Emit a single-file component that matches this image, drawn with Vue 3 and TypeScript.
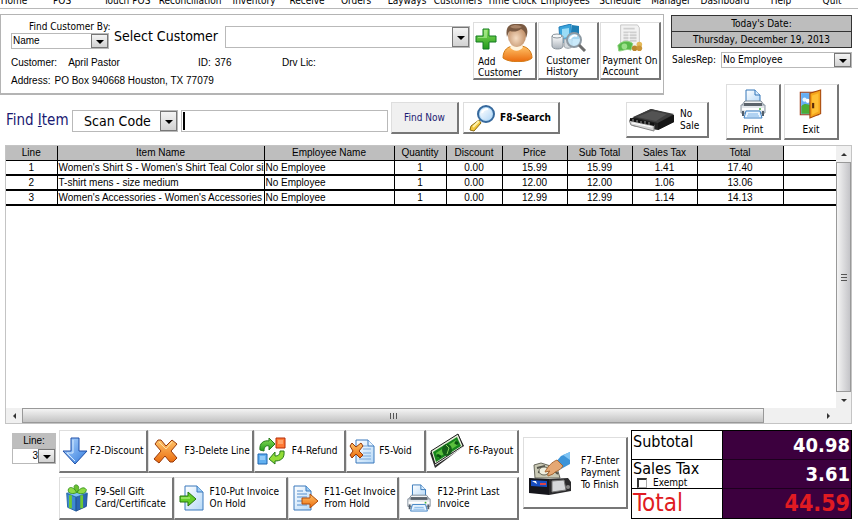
<script setup lang="ts">
import { ref } from 'vue'

interface InvoiceLine {
  item: string
  employee: string
  quantity: number
  discount: number
  price: number
  tax: number
}

interface Action {
  icon: string
  key: string
  lines: string[]
}

const menu: string[] = [
  'Home', 'POS', 'Touch POS', 'Reconciliation', 'Inventory', 'Receive', 'Orders', 'Layways',
  'Customers', 'Time Clock', 'Employees', 'Schedule', 'Manager', 'Dashboard', 'Help', 'Quit',
]

const headings: string[] = [
  'Line', 'Item Name', 'Employee Name', 'Quantity', 'Discount', 'Price', 'Sub Total', 'Sales Tax', 'Total',
]

const lines: InvoiceLine[] = [
  { item: "Women's Shirt S - Women's Shirt Teal Color size", employee: 'No Employee', quantity: 1, discount: 0, price: 15.99, tax: 1.41 },
  { item: 'T-shirt mens - size medium', employee: 'No Employee', quantity: 1, discount: 0, price: 12, tax: 1.06 },
  { item: "Women's Accessories - Women's Accessories", employee: 'No Employee', quantity: 1, discount: 0, price: 12.99, tax: 1.14 },
]

const customerActions: Action[] = [
  { icon: 'add', key: 'add', lines: ['Add', 'Customer'] },
  { icon: 'history', key: 'history', lines: ['Customer', 'History'] },
  { icon: 'account', key: 'account', lines: ['Payment On', 'Account'] },
]

const firstActions: Action[] = [
  { icon: 'down', key: 'f2', lines: ['F2-Discount'] },
  { icon: 'cross', key: 'f3', lines: ['F3-Delete Line'] },
  { icon: 'refund', key: 'f4', lines: ['F4-Refund'] },
  { icon: 'void', key: 'f5', lines: ['F5-Void'] },
  { icon: 'money', key: 'f6', lines: ['F6-Payout'] },
]

const secondActions: Action[] = [
  { icon: 'gift', key: 'f9', lines: ['F9-Sell Gift', 'Card/Certificate'] },
  { icon: 'hold', key: 'f10', lines: ['F10-Put Invoice', 'On Hold'] },
  { icon: 'unhold', key: 'f11', lines: ['F11-Get Invoice', 'From Hold'] },
  { icon: 'printer', key: 'f12', lines: ['F12-Print Last', 'Invoice'] },
]

const scan = ref('')
const exempt = ref(false)
const money = (value: number): string => value.toFixed(2)
const subtotal = lines.reduce((sum, line) => sum + line.price * line.quantity, 0)
const tax = lines.reduce((sum, line) => sum + line.tax, 0)
</script>

<template>
  <svg class="sprites" aria-hidden="true">
    <defs>
      <linearGradient id="g-blue" x1="0" y1="0" x2="1" y2="1"><stop offset="0" stop-color="#b9dcff" /><stop offset="1" stop-color="#2f78dc" /></linearGradient>
      <linearGradient id="g-orange" x1="0" y1="0" x2="0" y2="1"><stop offset="0" stop-color="#ffc46a" /><stop offset="1" stop-color="#ea6a0c" /></linearGradient>
      <linearGradient id="g-green" x1="0" y1="0" x2="0" y2="1"><stop offset="0" stop-color="#8be05a" /><stop offset="1" stop-color="#229a1c" /></linearGradient>
      <linearGradient id="g-paper" x1="0" y1="0" x2="1" y2="1"><stop offset="0" stop-color="#ffffff" /><stop offset="1" stop-color="#b5d8f7" /></linearGradient>
      <linearGradient id="g-grey" x1="0" y1="0" x2="0" y2="1"><stop offset="0" stop-color="#ffffff" /><stop offset="1" stop-color="#aab2ba" /></linearGradient>
      <radialGradient id="g-face" cx=".45" cy=".6" r=".6"><stop offset="0" stop-color="#f6dcc2" /><stop offset="1" stop-color="#bd8a62" /></radialGradient>
    </defs>
    <symbol id="i-add" viewBox="0 0 60 38">
      <path d="M9 5h6v7h7v6h-7v7H9v-7H2v-6h7z" fill="url(#g-green)" stroke="#127a22" />
      <path d="M10 6h3v8H4v-1h6z" fill="#b4f0a0" opacity=".6" />
      <path d="M29 34c0-8 5-12 11-12h6c7 0 12 5 12 12-5 5-23 5-29 0z" fill="url(#g-orange)" stroke="#d27a14" />
      <path d="M38 20h9l2 3c-3 5-10 5-13 0z" fill="#fff3dc" />
      <ellipse cx="43" cy="12" rx="9" ry="11" fill="url(#g-face)" />
      <path d="M33 13C31 4 35 0 40 0h7c6 1 8 6 5 14 0-5-2-8-5-9-4 3-8 3-11 2-2 1-2 4-3 6z" fill="#7a5a42" />
      <path d="M36 3c4-3 9-2 12 0-4 2-8 2-12 0z" fill="#a98468" />
    </symbol>
    <symbol id="i-history" viewBox="0 0 40 28">
      <path d="M11 3l12-3 1 17-12 2z" fill="#3aa4dc" stroke="#1d7cb8" />
      <path d="M14 5l7-1v9l-7 1z" fill="#9adcf6" />
      <path d="M24 1l7 1v13h-7z" fill="#1f7fb4" />
      <path d="M4 12v10c0 4 11 4 11 0V12z" fill="url(#g-grey)" stroke="#8b949c" />
      <ellipse cx="9" cy="12" rx="5" ry="2" fill="#f5f7f8" stroke="#8b949c" />
      <path d="M16 15v7c0 3 8 3 8 0v-7z" fill="#d4d9dd" stroke="#9aa2a8" />
      <circle cx="26" cy="16" r="7" fill="#bfe6fa" fill-opacity=".85" stroke="#8d9aa4" stroke-width="2" />
      <path d="M31 21l6 6" stroke="#6d6d6d" stroke-width="3" />
      <path d="M22 15c1-3 4-4 7-3" stroke="#fff" stroke-width="2" fill="none" />
    </symbol>
    <symbol id="i-account" viewBox="0 0 28 30">
      <path d="M4 1h18l2 3v22H4z" fill="#f2f2f2" stroke="#c4c4c4" />
      <path d="M7 5h12M7 9h14M7 12h14M7 15h14M7 18h14" stroke="#cfcfcf" stroke-width="2" />
      <path d="M13 9v10" stroke="#fff" />
      <path d="M1 23c4-5 11-6 16-2l-2 7c-5-2-9 1-13 1z" fill="#58b94a" stroke="#8fd47f" />
      <circle cx="8" cy="24" r="3" fill="#9be08a" />
      <circle cx="19" cy="26" r="3" fill="#b9862c" /><circle cx="24" cy="22" r="3" fill="#e3b858" /><circle cx="24" cy="26" r="3" fill="#c99436" />
    </symbol>
    <symbol id="i-search" viewBox="0 0 28 28">
      <path d="M10 16l2 3-7 8-4-1 1-4z" fill="#f3c63a" stroke="#8a6a10" />
      <path d="M4 23l6-6" stroke="#fff3a8" stroke-width="2" />
      <circle cx="17" cy="10" r="8" fill="#b6dcf8" stroke="#36689c" stroke-width="2" />
      <circle cx="17" cy="10" r="6" fill="url(#g-paper)" />
      <path d="M13 9c1-3 3-4 6-4" stroke="#fff" stroke-width="2" fill="none" />
    </symbol>
    <symbol id="i-drawer" viewBox="0 0 46 24">
      <path d="M1 11L22 1l23 6v7L29 22 4 18z" fill="#222" />
      <path d="M4 9L22 1l23 5-16 9z" fill="#3e3e3e" />
      <path d="M8 9L23 3l15 3-11 7z" fill="#535353" />
      <path d="M29 15l16-8v7l-16 8z" fill="#151515" />
      <path d="M0 12l25 5v6L2 17z" fill="#d6d6d6" stroke="#858585" />
      <path d="M1 10l24 5v3L1 13z" fill="#111" />
      <path d="M4 11v3M8 12v3M12 13v3M16 13v3M20 14v3" stroke="#999" />
      <path d="M3 15l20 4" stroke="#fff" />
    </symbol>
    <symbol id="i-printer" viewBox="0 0 26 30">
      <path d="M6 14V1h9l5 5v8z" fill="url(#g-paper)" stroke="#3476b8" />
      <path d="M15 1v5h5" fill="#d9edff" stroke="#3476b8" />
      <path d="M5 12h16l3 4v8H2v-8z" fill="url(#g-grey)" stroke="#7b8792" />
      <path d="M1 16h24v8H1z" fill="#e4e8ec" stroke="#8c97a2" />
      <path d="M4 14h18v3H4z" fill="#5b636b" />
      <path d="M2 20h22" stroke="#fff" stroke-width="2" />
      <circle cx="20" cy="20" r="1" fill="#41b53c" />
      <path d="M6 22h14l2 7H4z" fill="#e8f4ff" stroke="#3b80c4" />
      <path d="M8 25h10M7 27h12" stroke="#7ab2e6" />
      <path d="M3 22v5M23 22v5" stroke="#525f6c" stroke-width="2" />
    </symbol>
    <symbol id="i-exit" viewBox="0 0 22 28">
      <path d="M1 3h17v21H1z" fill="#8ac6ff" stroke="#a03c14" />
      <path d="M2 4h9v19H2z" fill="#66aef4" />
      <circle cx="5" cy="10" r="2" fill="#e7f5ff" /><circle cx="8" cy="11" r="2" fill="#fff" />
      <path d="M2 16c3-3 6-2 9 0v7H2z" fill="#4bad34" />
      <path d="M10 4l10-3v22l-10 4z" fill="#f5a51c" stroke="#a8480c" />
      <path d="M12 6l6-2v17l-6 3z" fill="#ffc035" />
      <path d="M13 13v5" stroke="#5b2a08" stroke-width="2" />
    </symbol>
    <symbol id="i-down" viewBox="0 0 26 28">
      <path d="M9 1h8v13h8L13 27 1 14h8z" fill="url(#g-blue)" stroke="#1f4fa8" />
      <path d="M11 3v13H5l8 8" stroke="#d5eaff" fill="none" />
    </symbol>
    <symbol id="i-cross" viewBox="0 0 26 26">
      <path d="M5 2l3 0 5 6 6-6 5 4-6 7 6 7-4 4-3 0-5-6-6 7-5-4 7-8-6-7z" fill="url(#g-orange)" stroke="#96380a" />
      <path d="M6 4l7 7 6-7" stroke="#ffe0a4" fill="none" />
    </symbol>
    <symbol id="i-refund" viewBox="0 0 30 28">
      <path d="M3 13C2 6 7 3 12 4V1l6 6-6 6v-4c-3-1-5 1-5 5z" fill="url(#g-green)" stroke="#267a1a" />
      <path d="M27 14c1 8-4 10-9 10v3l-6-5 6-7v4c3 0 5-1 5-5z" fill="#92dc36" stroke="#267a1a" />
      <path d="M19 1h9v10h-9z" fill="#ff7a35" stroke="#b52c08" /><path d="M21 3h5v4h-5z" fill="#ffa36a" />
      <path d="M1 17h9v10H1z" fill="#62b0f0" stroke="#1c64b0" /><path d="M3 19h5v4H3z" fill="#94ccf8" />
    </symbol>
    <symbol id="i-void" viewBox="0 0 26 26">
      <path d="M7 2h12l6 6v17H7z" fill="url(#g-paper)" stroke="#3a78bc" />
      <path d="M19 2v6h6" fill="#e8f4ff" stroke="#3a78bc" />
      <path d="M14 8h5M14 11h8M14 15h8M12 18h10M10 21h12" stroke="#7aa9da" />
      <path d="M3 5l4 4 5-4 2 3-4 5 4 4-3 3-4-4-4 4-2-3 3-4-3-5z" fill="url(#g-orange)" stroke="#96380a" />
    </symbol>
    <symbol id="i-money" viewBox="0 0 36 36">
      <path d="M1 20L29 1l6 12L6 35z" fill="#2c2c2c" />
      <path d="M2 18L29 1l5 12L6 31z" fill="#e4ecd8" stroke="#1d1d1d" />
      <path d="M4 19L28 4l4 9L7 29z" fill="#16851c" />
      <path d="M7 20L27 7l2 5L9 25z" fill="#5abf3d" />
      <ellipse cx="18" cy="17" rx="5" ry="6" fill="#145e19" /><path d="M17 12l3 3-2 6" stroke="#86d05e" fill="none" />
      <path d="M8 22l4 2M26 9l3 2" stroke="#0a5312" stroke-width="3" />
      <path d="M6 32L34 14" stroke="#eee" />
    </symbol>
    <symbol id="i-gift" viewBox="0 0 24 30">
      <path d="M1 10l10 4v15L2 25z" fill="#3d8ad2" stroke="#2364a4" /><path d="M11 14l12-4-1 14-11 5z" fill="#2b66b4" stroke="#204d8e" />
      <path d="M1 10l11-3 11 3-12 4z" fill="#7ec0f2" stroke="#2b6eae" />
      <path d="M5 12v14M17 12v14" stroke="#6fc932" stroke-width="3" />
      <path d="M12 9C6 12 1 9 3 5c3-3 6 0 9 4zM12 9c5 3 10 1 10-3-3-4-7-1-10 3z" fill="#8edb45" stroke="#3a9420" />
      <path d="M12 9C8 5 8 1 11 1s4 4 1 8z" fill="#6cc030" stroke="#3a9420" />
    </symbol>
    <symbol id="i-hold" viewBox="0 0 26 26">
      <path d="M6 1h12l6 6v18H6z" fill="url(#g-paper)" stroke="#3a78bc" />
      <path d="M18 1v6h6" fill="#9acbf4" stroke="#3a78bc" />
      <path d="M1 11h8V7l8 7-8 7v-4H1z" fill="#65ce27" stroke="#25760f" />
      <path d="M2 13h9" stroke="#c4f49a" />
    </symbol>
    <symbol id="i-unhold" viewBox="0 0 26 26">
      <path d="M1 1h12l5 5v19H1z" fill="url(#g-paper)" stroke="#3a78bc" />
      <path d="M13 1v5h5" fill="#9acbf4" stroke="#3a78bc" />
      <path d="M4 6h6M4 9h10M4 12h10M4 16h8M4 20h10" stroke="#568fcc" />
      <path d="M9 13h8V9l8 7-8 7v-4H9z" fill="url(#g-orange)" stroke="#b04a08" />
    </symbol>
    <symbol id="i-wallet" viewBox="0 0 44 44">
      <path d="M27 12L33 5l9-4v12l-9 5z" fill="#3d94d8" /><path d="M35 4l7-3v8z" fill="#7fc4f4" />
      <path d="M6 14l7-2 16 5 3 10H7z" fill="#c9c8b4" stroke="#66665a" />
      <path d="M9 17l8-2M10 21l14 2M22 16l8 7" stroke="#55554c" stroke-width="2" />
      <ellipse cx="16" cy="20" rx="5" ry="4" fill="#efeede" stroke="#6a6a5c" />
      <path d="M17 21c3-6 7-10 12-12l6 6c-3 5-8 5-10 8l-5 2c-1-2 1-4 2-5z" fill="#e5a874" stroke="#a76835" />
      <path d="M1 27l20 1v16l-20-2z" fill="#16161c" /><path d="M21 28l19-1 3 4v9l-22 4z" fill="#2a2a2c" />
      <path d="M3 29l16 1v6l-16-1z" fill="#174ec2" /><path d="M4 30h4l1 3z" fill="#fff" /><path d="M12 32h6v2h-6z" fill="#d44" />
      <path d="M24 30l12-1 2 10-14 2z" fill="#d6d8da" stroke="#777" />
      <circle cx="40" cy="36" r="2" fill="#888" />
    </symbol>
  </svg>

  <nav class="menu" aria-label="Main">
    <a v-for="entry in menu" :key="entry" href="#">{{ entry }}</a>
  </nav>

  <main class="page">
    <header class="top">
      <section class="customer">
        <div class="pick">
          <div class="pick-by">
            <label for="by">Find Customer By:</label>
            <span class="combo small"><select id="by"><option>Name</option></select></span>
          </div>
          <label class="big" for="customer">Select Customer</label>
          <span class="combo grow"><select id="customer"><option></option></select></span>
        </div>
        <dl class="facts">
          <div class="who"><dt>Customer:</dt><dd>April Pastor</dd></div>
          <div class="ident"><dt>ID:</dt><dd>376</dd></div>
          <div><dt>Drv Lic:</dt><dd></dd></div>
          <div class="address"><dt>Address:</dt><dd>PO Box 940668 Houston, TX 77079</dd></div>
        </dl>
        <div class="customer-actions">
          <button v-for="a in customerActions" :key="a.key" type="button" class="btn tall" :class="a.key">
            <svg class="icon"><use :href="'#i-' + a.icon" /></svg>
            <span><template v-for="(l, i) in a.lines" :key="l"><br v-if="i">{{ l }}</template></span>
          </button>
        </div>
      </section>
      <section class="session">
        <p class="date">Today's Date:</p>
        <p class="date">Thursday, December 19, 2013</p>
        <div class="rep">
          <label for="rep">SalesRep:</label>
          <span class="combo grow small"><select id="rep"><option>No Employee</option></select></span>
        </div>
      </section>
    </header>

    <section class="find">
      <label class="find-label" for="scan">Find <u>I</u>tem</label>
      <span class="combo code"><select aria-label="Find item by"><option>Scan Code</option></select></span>
      <span class="scan"><input id="scan" v-model="scan" type="text"></span>
      <button type="button" class="btn find-now">Find Now</button>
      <button type="button" class="btn f8"><svg class="icon"><use href="#i-search" /></svg>F8-Search</button>
      <button type="button" class="btn no-sale"><svg class="icon"><use href="#i-drawer" /></svg><span>No<br>Sale</span></button>
      <button type="button" class="btn square"><svg class="icon"><use href="#i-printer" /></svg>Print</button>
      <button type="button" class="btn square"><svg class="icon"><use href="#i-exit" /></svg>Exit</button>
    </section>

    <section class="grid">
      <div class="sheet">
        <table>
          <colgroup>
            <col class="c-line"><col class="c-item"><col class="c-emp"><col class="c-qty"><col class="c-disc">
            <col class="c-num"><col class="c-num"><col class="c-num"><col class="c-total"><col>
          </colgroup>
          <thead>
            <tr><th v-for="h in headings" :key="h" scope="col">{{ h }}</th><td></td></tr>
          </thead>
          <tbody>
            <tr v-for="(line, i) in lines" :key="i">
              <td>{{ i + 1 }}</td>
              <td class="text">{{ line.item }}</td>
              <td class="text">{{ line.employee }}</td>
              <td>{{ line.quantity }}</td>
              <td>{{ money(line.discount) }}</td>
              <td>{{ money(line.price) }}</td>
              <td>{{ money(line.price * line.quantity) }}</td>
              <td>{{ money(line.tax) }}</td>
              <td>{{ money(line.price * line.quantity + line.tax) }}</td>
              <td></td>
            </tr>
          </tbody>
        </table>
      </div>
      <div class="vbar"><i class="arrow up"></i><div class="thumb"><i class="grip"></i></div><i class="arrow dn"></i></div>
      <div class="hbar"><i class="arrow lt"></i><div class="thumb"><i class="grip"></i></div><i class="arrow rt"></i></div>
      <div class="corner"></div>
    </section>

    <footer class="bottom">
      <div class="line-pick">
        <label for="line">Line:</label>
        <span class="combo line"><select id="line"><option>3</option></select></span>
      </div>
      <div class="actions">
        <div class="row first">
          <button v-for="a in firstActions" :key="a.key" type="button" class="btn" :class="a.key">
            <svg class="icon"><use :href="'#i-' + a.icon" /></svg><span>{{ a.lines[0] }}</span>
          </button>
        </div>
        <div class="row second">
          <button v-for="a in secondActions" :key="a.key" type="button" class="btn" :class="a.key">
            <svg class="icon"><use :href="'#i-' + a.icon" /></svg><span>{{ a.lines[0] }}<br>{{ a.lines[1] }}</span>
          </button>
        </div>
      </div>
      <button type="button" class="btn pay">
        <svg class="icon"><use href="#i-wallet" /></svg><span>F7-Enter<br>Payment<br>To Finish</span>
      </button>
      <dl class="totals">
        <dt>Subtotal</dt><dd>{{ money(subtotal) }}</dd>
        <dt class="taxed">Sales Tax<label class="exempt"><input v-model="exempt" type="checkbox">Exempt</label></dt><dd>{{ money(tax) }}</dd>
        <dt class="due">Total</dt><dd class="due">{{ money(subtotal + tax) }}</dd>
      </dl>
    </footer>
  </main>
</template>

<style>
body { background: #fff; overflow: hidden; }
#app { font-family: "DejaVu Sans Condensed", "Noto Sans", sans-serif; font-size: 10px; line-height: 12px; color: #000; }
</style>

<style scoped>
* { box-sizing: border-box; }
p, dl, dd { margin: 0; }
.sprites { position: absolute; width: 0; height: 0; }
select, input, button { font: inherit; color: inherit; margin: 0; border-radius: 0; }
.icon { flex: none; display: block; }

.menu {
  display: grid; height: 9px; overflow: hidden; align-items: end; justify-items: center;
  grid-template-columns: 28fr 68fr 62fr 64fr 64fr 42fr 56fr 46fr 56fr 52fr 54fr 56fr 46fr 62fr 50fr 52fr;
  grid-template-rows: 8px; border-bottom: 1px solid #b8b8b8;
}
.menu a { min-width: 0; width: 0; display: flex; justify-content: center; white-space: nowrap; color: #000; text-decoration: none; line-height: 14px; }

.page { padding: 5px 6px 0 0; }
.top { display: flex; gap: 7px; }
.customer {
  flex: 1; display: grid; grid-template-columns: 1fr auto; grid-template-rows: 34px 1fr; column-gap: 3px;
  padding: 5px 2px 0 10px; height: 81px; border: 1px solid #b4b4b4; border-bottom-width: 2px;
}
.pick { display: flex; gap: 5px; }
.pick-by { width: 98px; display: flex; flex-direction: column; }
.pick-by label { padding-left: 18px; line-height: 13px; white-space: nowrap; }
.big { font-size: 14px; line-height: 32px; width: 106px; white-space: nowrap; }
.combo { position: relative; display: flex; border: 1px solid #b9b9b9; height: 22px; }
.combo select { flex: 1; width: 100%; min-width: 0; appearance: none; border: 0; background: #fff; padding: 0 18px 0 1px; outline: 0; }
.combo::after {
  content: ""; position: absolute; top: 0; right: 0; bottom: 0; width: 15px; border: 1px solid #777; pointer-events: none;
  background: linear-gradient(#f4f4f4, #d2d2d2);
}
.combo::before {
  content: ""; position: absolute; z-index: 1; right: 4px; top: 50%; margin-top: -1px; pointer-events: none;
  border: 4px solid transparent; border-top-color: #000; border-bottom: 0;
}
.combo.small { height: 16px; line-height: 14px; }
.pick-by .combo select { font-family: "Liberation Sans", sans-serif; }
.grow { flex: 1; }
.pick > .combo { margin-top: 6px; }
.facts {
  display: grid; grid-template-columns: 187px 84px 1fr; font-family: "Liberation Sans", sans-serif;
  line-height: 18px; align-content: start; white-space: nowrap;
}
.facts div { display: flex; gap: 4px; }
.facts .who { gap: 11px; }
.facts .address { grid-column: 1 / -1; }
.customer-actions { grid-column: 2; grid-row: 1 / 3; display: flex; padding-top: 2px; gap: 1px; }

.btn {
  display: flex; align-items: center; background: #fff; padding: 0; text-align: left; line-height: 12px; white-space: nowrap;
  border: 1px solid #dedede; border-right: 2px solid #777; border-bottom: 2px solid #777;
}
.tall { flex-direction: column; height: 58px; width: 61px; justify-content: space-between; line-height: 11px; padding: 1px 0; }
.tall.add { width: 64px; align-items: flex-start; }
.tall.add span { padding-left: 4px; }
.tall .icon { width: 40px; height: 28px; }
.tall.add .icon { width: 60px; height: 38px; margin-bottom: -6px; }

.session { width: 181px; padding-top: 1px; }
.date { background: #bdbdbd; border: 1px solid #333; text-align: center; line-height: 15px; }
.date + .date { border-top: 0; }
.rep { display: flex; gap: 6px; margin-top: 4px; line-height: 16px; white-space: nowrap; }
.rep label { padding-left: 1px; width: 44px; }

.find { display: flex; align-items: flex-end; margin-top: -11px; height: 56px; padding: 0 13px 0 6px; }
.find > * { flex: none; }
.find-label { font-size: 15px; line-height: 20px; width: 66px; color: #1a1a72; white-space: nowrap; margin-bottom: 10px; }
.code { width: 106px; margin-bottom: 8px; font-size: 14px; }
.code select { padding-left: 11px; }
.find .scan { flex: 1; min-width: 0; display: flex; height: 22px; margin: 0 3px 8px; border: 1px solid #b9b9b9; padding: 1px; }
.scan input { flex: 1; min-width: 0; border: 0; border-left: 2px solid #000; outline: 0; padding: 0 4px; font-size: 14px; }
.find-now { width: 68px; height: 32px; margin-bottom: 6px; background: #f0f0f0; color: #1a1a72; justify-content: center; }
.f8 { width: 97px; height: 32px; margin: 0 66px 6px 4px; font-weight: bold; gap: 3px; padding-left: 5px; }
.f8 .icon { width: 28px; height: 28px; }
.no-sale { width: 83px; height: 36px; margin: 0 17px 2px 0; gap: 5px; padding-left: 2px; }
.no-sale .icon { width: 46px; height: 24px; }
.square { flex-direction: column; justify-content: space-between; width: 55px; height: 56px; padding: 4px 2px 2px; }
.square .icon { width: 26px; height: 30px; }
.square + .square { margin-left: 3px; }

.grid {
  display: grid; grid-template-columns: 1fr 15px; grid-template-rows: 262px 15px; margin: 5px 0 0 5px;
  border: 1px solid #c4c4c4;
}
.sheet { overflow: hidden; }
table { width: 100%; table-layout: fixed; border-collapse: collapse; font-family: "Liberation Sans", sans-serif; line-height: 13px; }
.c-line { width: 51px; } .c-item { width: 207px; } .c-emp { width: 130px; } .c-qty { width: 52px; } .c-disc { width: 56px; }
.c-num { width: 65px; } .c-total { width: 86px; }
th, td { padding: 0; height: 15px; text-align: center; font-weight: normal; overflow: hidden; white-space: nowrap; border-right: 1px solid #000; border-bottom: 1px solid #000; }
thead th, thead td { height: 14px; line-height: 12px; }
tbody td { border-bottom-width: 2px; }
th { background: #bebebe; }
tr > :last-child { border-right: 0; }
td.text { text-align: left; padding-left: 1px; }
.vbar, .hbar { display: flex; align-items: center; background: #f0f0f0; }
.vbar { flex-direction: column; }
.thumb { display: flex; align-items: center; justify-content: center; border: 1px solid #999; background: linear-gradient(#f4f4f4, #c3c3c3); }
.vbar .thumb { flex: 1; width: 100%; background: linear-gradient(90deg, #f4f4f4, #c4c4c8); }
.hbar .thumb { height: 100%; flex: 744; }
.arrow { flex: none; width: 16px; height: 16px; display: flex; align-items: center; justify-content: center; }
.arrow::after { content: ""; border: 3px solid transparent; }
.up::after { border-bottom-color: #333; border-top: 0; }
.dn::after { border-top-color: #333; border-bottom: 0; }
.lt::after { border-right-color: #333; border-left: 0; }
.rt::after { border-left-color: #333; border-right: 0; }
.hbar .rt { flex: 66; justify-content: flex-end; padding-right: 6px; }
.grip { width: 7px; height: 6px; background: repeating-linear-gradient(90deg, #555 0 1px, transparent 1px 3px); }
.vbar .grip { height: 7px; width: 6px; background: repeating-linear-gradient(#555 0 1px, transparent 1px 3px); }
.corner { background: #f0f0f0; }

.bottom { display: flex; align-items: flex-start; margin-top: 6px; padding-left: 12px; }
.line-pick { width: 44px; margin: 3px 3px 0 0; font-family: "Liberation Sans", sans-serif; }
.line-pick label { display: block; background: #bebebe; text-align: center; line-height: 15px; }
.line { height: 16px; }
.line select { padding: 0 17px 0 0; text-align: right; text-align-last: right; }
.actions { flex: 1; display: flex; flex-direction: column; gap: 4px; }
.row { display: grid; }
.row .btn { height: 43px; gap: 4px; padding: 0 2px; }
.first { grid-template-columns: 90fr 104fr 93fr 80fr 94fr; }
.second { grid-template-columns: 115fr 115fr 111fr 120fr; }
.row .icon { width: 26px; height: 28px; }
.row .f2 { gap: 2px; }
.row .f3 { gap: 5px; padding-left: 4px; }
.row .f4 { gap: 5px; padding-left: 2px; }
.row .f4 .icon { width: 30px; }
.row .f5 { gap: 4px; }
.row .f6 .icon { width: 36px; height: 36px; }
.second .btn { padding-left: 4px; gap: 5px; }
.second .f12 { padding-left: 6px; }
.pay { width: 105px; height: 72px; margin: 7px 3px 0 4px; padding-left: 4px; gap: 9px; }
.pay .icon { width: 44px; height: 44px; }
.totals {
  width: 221px; display: grid; grid-template-columns: 91px 1fr; grid-template-rows: 29px 29px 29px; border: 1px solid #000;
  font-size: 16px; line-height: 22px;
}
.totals dt { border-right: 1px solid #000; border-bottom: 1px solid #000; padding-left: 1px; white-space: nowrap; }
.totals dd { background: #3c003e; color: #fff; text-align: right; font-weight: bold; font-size: 20px; line-height: 28px; padding-right: 1px; border-bottom: 1px solid #1d001e; }
.totals .due { color: #e01b22; border-bottom: 0; font-size: 24px; line-height: 28px; }
.totals dd.due { font-size: 23px; }
.taxed { display: flex; flex-direction: column; }
.totals .taxed { line-height: 18px; }
.exempt { display: flex; align-items: center; gap: 6px; padding-left: 4px; font-size: 10px; line-height: 10px; height: 10px; }
.exempt input { appearance: none; width: 10px; height: 10px; background: #fff; border: 1px solid #aaa; border-top: 2px solid #333; border-left: 2px solid #333; }
.exempt input:checked { background: #333; }
</style>
